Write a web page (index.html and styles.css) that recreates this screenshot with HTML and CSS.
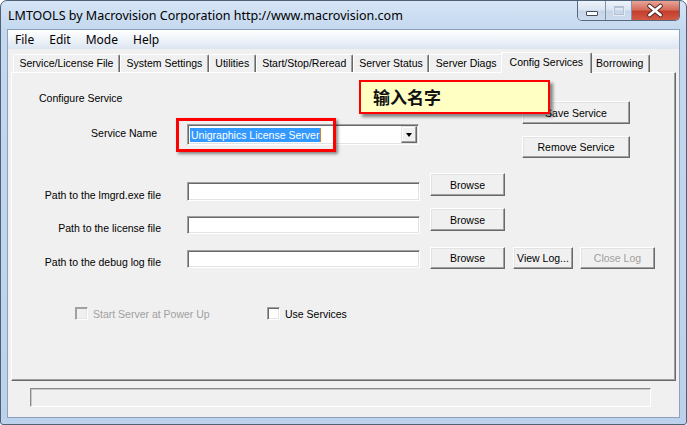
FILE: index.html
```
<!DOCTYPE html>
<html>
<head>
<meta charset="utf-8">
<title>LMTOOLS</title>
<link rel="stylesheet" href="styles.css">
</head>
<body>
<div class="window">
  <div class="titlebar">
    <span class="title">LMTOOLS by Macrovision Corporation http://www.macrovision.com</span>
    <div class="caption-btns">
      <div class="cbtn cmin"><span class="min-icon"></span></div>
      <div class="cbtn cmax"><span class="max-icon"></span></div>
      <div class="cbtn cclose">
        <svg width="47" height="19" viewBox="0 0 47 19">
          <path d="M17.5 5 L28.5 14 M28.5 5 L17.5 14" stroke="#4a2420" stroke-width="4.6" stroke-linecap="round" fill="none"/>
          <path d="M17.5 5 L28.5 14 M28.5 5 L17.5 14" stroke="#ffffff" stroke-width="2.8" stroke-linecap="round" fill="none"/>
        </svg>
      </div>
    </div>
  </div>
  <div class="client">
    <div class="menubar">
      <span>File</span><span>Edit</span><span>Mode</span><span>Help</span>
    </div>
    <div class="tabs">
      <div class="tab">Service/License File</div>
      <div class="tab">System Settings</div>
      <div class="tab">Utilities</div>
      <div class="tab">Start/Stop/Reread</div>
      <div class="tab">Server Status</div>
      <div class="tab">Server Diags</div>
      <div class="tab active">Config Services</div>
      <div class="tab">Borrowing</div>
    </div>
    <div class="panel">
      <div class="top">
        <div class="top-left">
          <div class="heading">Configure Service</div>
          <div class="service-row">
            <span class="svc-lbl">Service Name</span>
            <div class="combo">
              <span class="combo-text"><span class="sel">Unigraphics License Server</span></span>
              <span class="drop"><span class="arrow"></span></span>
            </div>
          </div>
        </div>
        <div class="top-right">
          <button class="btn wide">Save Service</button>
          <button class="btn wide remove">Remove Service</button>
        </div>
      </div>
      <div class="row row1">
        <span class="lbl">Path to the lmgrd.exe file</span>
        <div class="field"></div>
        <button class="btn browse">Browse</button>
      </div>
      <div class="row row2">
        <span class="lbl">Path to the license file</span>
        <div class="field"></div>
        <button class="btn browse">Browse</button>
      </div>
      <div class="row row3">
        <span class="lbl">Path to the debug log file</span>
        <div class="field"></div>
        <button class="btn browse">Browse</button>
        <button class="btn view">View Log...</button>
        <button class="btn closelog">Close Log</button>
      </div>
      <div class="checks">
        <div class="check first disabled"><span class="box"></span><span class="check-text">Start Server at Power Up</span></div>
        <div class="check"><span class="box"></span><span class="check-text">Use Services</span></div>
      </div>
      <div class="callout">输入名字</div>
      <div class="redbox"></div>
    </div>
    <div class="status"></div>
  </div>
</div>
</body>
</html>
```
FILE: styles.css
```
html, body {
  margin: 0;
  padding: 0;
  background: #ffffff;
}

.window {
  width: 687px;
  height: 425px;
  box-sizing: border-box;
  border: 1px solid #4e6177;
  border-radius: 7px 7px 3px 3px;
  background: linear-gradient(180deg, #d6e5f6 0px, #c4d8ef 28px, #bcd2ec 100%);
  padding: 0 6px 6px;
  display: flex;
  flex-direction: column;
  overflow: hidden;
}

.titlebar {
  height: 28px;
  display: flex;
  align-items: flex-start;
  flex-shrink: 0;
}

.title {
  font-family: "Noto Sans", "Open Sans", sans-serif;
  font-size: 12.5px;
  line-height: 29px;
  padding-left: 1px;
  color: #000;
  white-space: nowrap;
}

.caption-btns {
  margin-left: auto;
  display: flex;
  height: 19px;
  border: 1px solid #55697f;
  border-top: none;
  border-radius: 0 0 5px 5px;
  overflow: hidden;
}

.cbtn {
  height: 19px;
  display: flex;
  align-items: center;
  justify-content: center;
}

.cmin, .cmax {
  background: linear-gradient(180deg, #eef3fa 0%, #dbe5f2 45%, #c6d5e8 55%, #cfdcee 100%);
  border-right: 1px solid #8194ab;
}

.cmin { width: 27px; }
.cmax { width: 25px; }

.cclose {
  width: 47px;
  background: linear-gradient(180deg, #e8a597 0%, #d66d5d 45%, #c43f2c 55%, #d35a46 100%);
}

.min-icon {
  width: 10px;
  height: 3px;
  margin-top: 5px;
  background: #fff;
  border: 1px solid #3e4c5e;
  border-radius: 1px;
}

.max-icon {
  width: 8px;
  height: 6px;
  border: 1px solid #b3c1d3;
  border-top-width: 2px;
  box-shadow: 0 0 0 1px #e4ebf4;
}

.client {
  flex: 1;
  background: #f0f0f0;
  border: 1px solid #8ba1bd;
  display: flex;
  flex-direction: column;
  font-family: "Liberation Sans", Arial, sans-serif;
  font-size: 10.5px;
  color: #000;
}

.menubar {
  height: 19px;
  display: flex;
  align-items: center;
  gap: 15px;
  padding-left: 7px;
  background: linear-gradient(180deg, #ffffff 0%, #eef3f9 50%, #dce5f1 100%);
  font-family: "Noto Sans", "Open Sans", sans-serif;
  font-size: 12px;
  flex-shrink: 0;
}

.tabs {
  display: flex;
  align-items: flex-end;
  height: 20px;
  margin: 3px 0 0 5px;
  position: relative;
  z-index: 1;
  flex-shrink: 0;
}

.tab {
  height: 18px;
  box-sizing: border-box;
  padding: 0 5.5px;
  border: 1px solid;
  border-color: #ffffff #696969 transparent #ffffff;
  border-bottom: none;
  border-radius: 2px 2px 0 0;
  box-shadow: inset -1px 0 #a0a0a0;
  line-height: 17px;
  white-space: nowrap;
  background: #f0f0f0;
}

.tab.active {
  height: 21px;
  margin: 0 -2px -1px;
  padding: 0 7.5px;
  line-height: 18px;
  position: relative;
  z-index: 2;
}

.panel {
  height: 309px;
  box-sizing: border-box;
  margin: 0 3px;
  border: 1px solid;
  border-color: #ffffff #696969 #696969 #ffffff;
  box-shadow: inset -1px -1px #a0a0a0;
  position: relative;
  flex-shrink: 0;
}

.top {
  display: flex;
  height: 100px;
}

.top-left {
  width: 408px;
  padding-top: 18px;
  box-sizing: border-box;
}

.heading {
  margin-left: 27px;
  line-height: 14px;
}

.service-row {
  display: flex;
  align-items: flex-start;
  margin-top: 19px;
}

.svc-lbl {
  width: 145px;
  text-align: right;
  line-height: 14px;
  margin-top: 2px;
}

.combo {
  margin-left: 30px;
  width: 232px;
  height: 21px;
  box-sizing: border-box;
  background: #fff;
  border: 1px solid;
  border-color: #a0a0a0 #ffffff #ffffff #a0a0a0;
  box-shadow: inset 1px 1px #696969, inset -1px -1px #e3e3e3;
  display: flex;
  align-items: center;
}

.combo-text {
  flex: 1;
  padding-left: 2px;
  display: flex;
}

.sel {
  background: #3399ff;
  color: #fff;
  line-height: 14px;
  padding: 0 1px;
  border-right: 1px solid #d9822b;
  white-space: nowrap;
}

.drop {
  width: 16px;
  height: 17px;
  box-sizing: border-box;
  margin-right: 1px;
  background: #f0f0f0;
  border: 1px solid;
  border-color: #e3e3e3 #696969 #696969 #e3e3e3;
  box-shadow: inset -1px -1px #a0a0a0, inset 1px 1px #ffffff;
  display: flex;
  align-items: center;
  justify-content: center;
}

.arrow {
  width: 0;
  height: 0;
  border-left: 3.5px solid transparent;
  border-right: 3.5px solid transparent;
  border-top: 4px solid #000;
}

.top-right {
  margin-left: 102px;
  padding-top: 28px;
  display: flex;
  flex-direction: column;
  align-items: flex-start;
}

.btn {
  box-sizing: border-box;
  margin: 0;
  padding: 0;
  border: 1px solid;
  border-color: #ffffff #696969 #696969 #ffffff;
  box-shadow: inset -1px -1px #a0a0a0, inset 1px 1px #e3e3e3;
  background: #f0f0f0;
  font-family: "Liberation Sans", Arial, sans-serif;
  font-size: 10.5px;
  color: #000;
  display: flex;
  align-items: center;
  justify-content: center;
  height: 23px;
}

.btn.wide {
  width: 108px;
}

.btn.remove {
  margin-top: 12px;
  height: 22px;
}

.row {
  display: flex;
  align-items: flex-start;
}

.lbl {
  width: 149px;
  text-align: right;
  line-height: 14px;
  white-space: nowrap;
}

.field {
  margin-left: 26px;
  width: 233px;
  box-sizing: border-box;
  background: #fff;
  border: 1px solid;
  border-color: #a0a0a0 #ffffff #ffffff #a0a0a0;
  box-shadow: inset 1px 1px #696969, inset -1px -1px #e3e3e3;
}

.btn.browse {
  margin-left: 10px;
  width: 75px;
}

.btn.view {
  margin-left: 8px;
  width: 60px;
}

.btn.closelog {
  margin-left: 7px;
  width: 75px;
  color: #a0a0a0;
}

.row1 { height: 35px; }
.row1 .lbl { margin-top: 15px; }
.row1 .field { margin-top: 9px; height: 19px; }

.row2 { height: 39px; }
.row2 .lbl { margin-top: 13px; }
.row2 .field { margin-top: 8px; height: 18px; }

.row3 { height: 22px; }
.row3 .lbl { margin-top: 8px; }
.row3 .field { margin-top: 3px; height: 18px; }
.row3 .btn { height: 22px; }

.checks {
  display: flex;
  margin-top: 38px;
  padding-left: 63px;
  height: 13px;
}

.check {
  display: flex;
  align-items: center;
}

.check.first {
  width: 192px;
}

.box {
  width: 13px;
  height: 13px;
  box-sizing: border-box;
  background: #fff;
  border: 1px solid;
  border-color: #a0a0a0 #ffffff #ffffff #a0a0a0;
  box-shadow: inset 1px 1px #696969, inset -1px -1px #e3e3e3;
}

.check.disabled {
  color: #a0a0a0;
}

.check.disabled .box {
  background: #f0f0f0;
  box-shadow: inset 1px 1px #a0a0a0, inset -1px -1px #e3e3e3;
}

.check-text {
  margin-left: 5px;
  white-space: nowrap;
}

.callout {
  position: absolute;
  left: 347px;
  top: 7px;
  width: 191px;
  height: 34px;
  box-sizing: border-box;
  background: #ffffc4;
  border: 2px solid #ff0000;
  box-shadow: 3px 3px 3px rgba(0, 0, 0, 0.45);
  padding-left: 12px;
  font-family: "Noto Sans CJK SC", "Noto Sans", sans-serif;
  font-weight: bold;
  font-size: 17px;
  line-height: 29px;
  color: #111;
}

.redbox {
  position: absolute;
  left: 164px;
  top: 45px;
  width: 160px;
  height: 34px;
  box-sizing: border-box;
  border: 3px solid #ff0000;
  box-shadow: 2px 2px 3px rgba(0, 0, 0, 0.45);
}

.status {
  margin: 7px 28px 0 22px;
  height: 19px;
  box-sizing: border-box;
  border: 1px solid;
  border-color: #8a8a8a #ffffff #ffffff #8a8a8a;
  box-shadow: inset 1px 1px #c8c8c8;
  flex-shrink: 0;
}
```
